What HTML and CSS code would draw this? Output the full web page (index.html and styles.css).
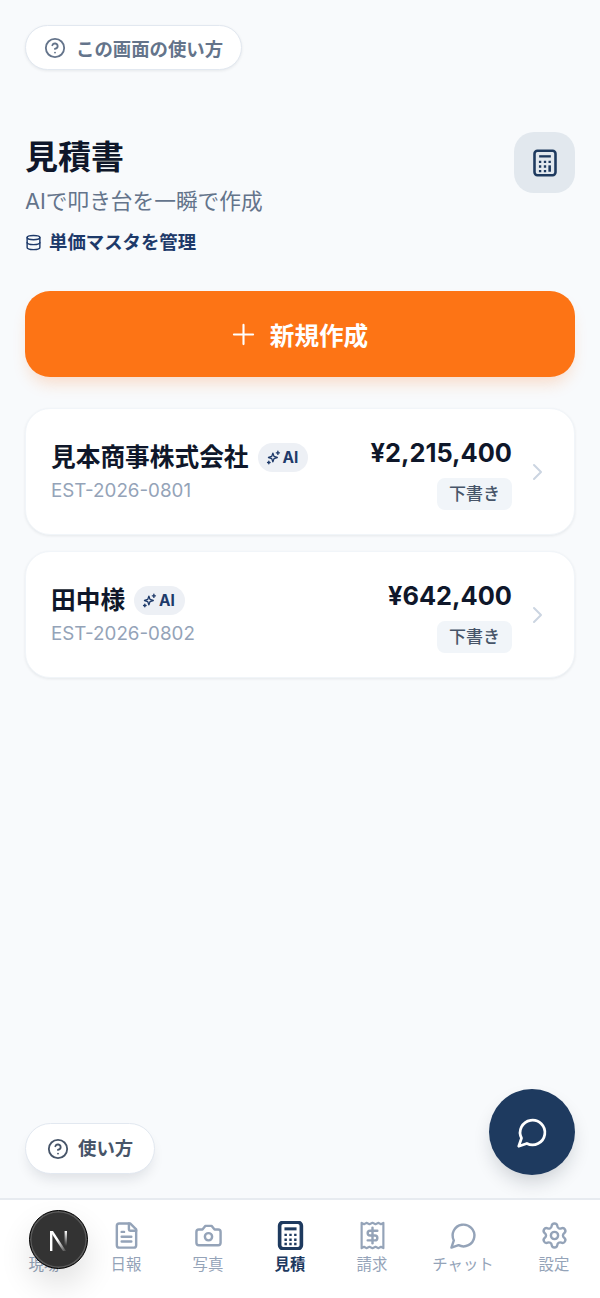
FILE: index.html
```html
<!DOCTYPE html>
<html lang="ja">
<head>
<meta charset="utf-8">
<title>見積書</title>
<link rel="stylesheet" href="styles.css">
</head>
<body>
<div class="page">
  <main class="main">
    <button class="help-pill">
      <svg class="help-icon" viewBox="0 0 24 24" fill="none" stroke="currentColor" stroke-width="2" stroke-linecap="round" stroke-linejoin="round"><circle cx="12" cy="12" r="10"/><path d="M9.100 9a3 3 0 0 1 5.800 1c0 2-3 3-3 3"/><path d="M12 17h.01"/></svg>
      <span>この画面の使い方</span>
    </button>
    <header class="head">
      <div>
        <h1 class="title">見積書</h1>
        <p class="sub">AIで叩き台を一瞬で作成</p>
        <a class="master">
          <svg class="master-icon" viewBox="0 0 24 24" fill="none" stroke="currentColor" stroke-width="2" stroke-linecap="round" stroke-linejoin="round"><ellipse cx="12" cy="5" rx="9" ry="3"/><path d="M3 5v14c0 1.700 4 3 9 3s9-1.300 9-3V5"/><path d="M3 12c0 1.700 4 3 9 3s9-1.300 9-3"/></svg>
          <span>単価マスタを管理</span>
        </a>
      </div>
      <div class="calc-box">
        <svg class="calc-icon" viewBox="0 0 24 24"><rect x="3" y="1.500" width="18" height="21" rx="2.500" fill="none" stroke="currentColor" stroke-width="2.200"/><path d="M7 6.300h10" stroke="currentColor" stroke-width="2"/><path d="M16 14v5.500" stroke="currentColor" stroke-width="2.200"/><path d="M6.800 10h2v2h-2zM11 10h2v2h-2zM15 10h2v2h-2zM6.800 14h2v2h-2zM11 14h2v2h-2zM6.800 18h2v2h-2zM11 18h2v2h-2z" fill="currentColor"/></svg>
      </div>
    </header>
    <button class="create">
      <svg class="plus" viewBox="0 0 24 24" fill="none" stroke="currentColor" stroke-width="2.200" stroke-linecap="round"><path d="M12 2v20M2 12h20"/></svg>
      <span>新規作成</span>
    </button>
    <section class="list">
      <article class="card">
        <div class="card-left">
          <div class="name-row">
            <span class="name">見本商事株式会社</span>
            <span class="ai"><svg class="spark" viewBox="0 0 24 24" fill="none" stroke="currentColor" stroke-width="2.200" stroke-linecap="round" stroke-linejoin="round"><path d="M11 5l1.800 5.200L18 12l-5.200 1.800L11 19l-1.800-5.200L4 12l5.200-1.800z"/><path d="M19 2v5M16.500 4.500h5M4.500 18v4M2.500 20h4"/></svg>AI</span>
          </div>
          <div class="code">EST-2026-0801</div>
        </div>
        <div class="card-right">
          <div class="amount">¥2,215,400</div>
          <span class="status">下書き</span>
        </div>
        <svg class="chev" viewBox="0 0 24 24" fill="none" stroke="currentColor" stroke-width="2" stroke-linecap="round" stroke-linejoin="round"><path d="M9 5l7 7-7 7"/></svg>
      </article>
      <article class="card">
        <div class="card-left">
          <div class="name-row">
            <span class="name">田中様</span>
            <span class="ai"><svg class="spark" viewBox="0 0 24 24" fill="none" stroke="currentColor" stroke-width="2.200" stroke-linecap="round" stroke-linejoin="round"><path d="M11 5l1.800 5.200L18 12l-5.200 1.800L11 19l-1.800-5.200L4 12l5.200-1.800z"/><path d="M19 2v5M16.500 4.500h5M4.500 18v4M2.500 20h4"/></svg>AI</span>
          </div>
          <div class="code">EST-2026-0802</div>
        </div>
        <div class="card-right">
          <div class="amount">¥642,400</div>
          <span class="status">下書き</span>
        </div>
        <svg class="chev" viewBox="0 0 24 24" fill="none" stroke="currentColor" stroke-width="2" stroke-linecap="round" stroke-linejoin="round"><path d="M9 5l7 7-7 7"/></svg>
      </article>
    </section>
  </main>

  <nav class="tabs">
    <a class="tab"><svg class="tab-icon" viewBox="0 0 24 24"></svg><span>現場</span></a>
    <a class="tab">
      <svg class="tab-icon" viewBox="0 0 24 24" fill="none" stroke="currentColor" stroke-width="2" stroke-linecap="round" stroke-linejoin="round"><path d="M15 2H6a2 2 0 0 0-2 2v16a2 2 0 0 0 2 2h12a2 2 0 0 0 2-2V7z"/><path d="M14 2v5a1 1 0 0 0 1 1h5"/><path d="M8 9h2M8 13h8M8 17h8"/></svg>
      <span>日報</span>
    </a>
    <a class="tab">
      <svg class="tab-icon" viewBox="0 0 24 24" fill="none" stroke="currentColor" stroke-width="2" stroke-linecap="round" stroke-linejoin="round"><path d="M14.500 4h-5L7 7H4a2 2 0 0 0-2 2v9a2 2 0 0 0 2 2h16a2 2 0 0 0 2-2V9a2 2 0 0 0-2-2h-3z"/><circle cx="12" cy="13" r="3"/></svg>
      <span>写真</span>
    </a>
    <a class="tab tab-active">
      <svg class="tab-icon" viewBox="0 0 24 24"><rect x="3" y="1" width="18" height="22" rx="3" fill="none" stroke="currentColor" stroke-width="3"/><path d="M7 6.500h10" stroke="currentColor" stroke-width="2.500"/><path d="M7 10.500h2v2H7zM11 10.500h2v2h-2zM15 10.500h2v2h-2zM7 14.500h2v2H7zM11 14.500h2v2h-2zM15 14.500h2v2h-2zM7 18h2v2H7zM11 18h2v2h-2zM15 18h2v2h-2z" fill="currentColor"/></svg>
      <span>見積</span>
    </a>
    <a class="tab">
      <svg class="tab-icon" viewBox="0 0 24 24" fill="none" stroke="currentColor" stroke-width="1.800" stroke-linecap="round" stroke-linejoin="round"><path d="M3 1.500l2 1.200 2-1.200 2.500 1.200L12 1.500l2.500 1.200L17 1.500l2 1.200 2-1.200v21l-2-1.200-2 1.200-2.500-1.200-2.500 1.200-2.500-1.200L7 22.500l-2-1.200-2 1.200z"/><path d="M16 8h-6a2 2 0 0 0 0 4h4a2 2 0 0 1 0 4H8" stroke-width="2"/><path d="M12 18.500V5.500" stroke-width="2"/></svg>
      <span>請求</span>
    </a>
    <a class="tab">
      <svg class="tab-icon" viewBox="0 0 24 24" fill="none" stroke="currentColor" stroke-width="2" stroke-linecap="round" stroke-linejoin="round"><path d="M7.900 20A9 9 0 1 0 4 16.100L2 22z"/></svg>
      <span>チャット</span>
    </a>
    <a class="tab">
      <svg class="tab-icon" viewBox="0 0 24 24" fill="none" stroke="currentColor" stroke-width="2" stroke-linecap="round" stroke-linejoin="round"><path d="M9.670 4.140a2.340 2.340 0 0 1 4.660 0 2.340 2.340 0 0 0 3.320 1.910 2.340 2.340 0 0 1 2.330 4.030 2.340 2.340 0 0 0 0 3.830 2.340 2.340 0 0 1-2.330 4.030 2.340 2.340 0 0 0-3.320 1.920 2.340 2.340 0 0 1-4.660 0 2.340 2.340 0 0 0-3.320-1.920 2.340 2.340 0 0 1-2.330-4.030 2.340 2.340 0 0 0 0-3.830 2.340 2.340 0 0 1 2.330-4.030 2.340 2.340 0 0 0 3.320-1.910"/><circle cx="12" cy="12" r="3"/></svg>
      <span>設定</span>
    </a>
  </nav>

  <button class="float-help">
    <svg class="float-help-icon" viewBox="0 0 24 24" fill="none" stroke="currentColor" stroke-width="2" stroke-linecap="round" stroke-linejoin="round"><circle cx="12" cy="12" r="10"/><path d="M9.100 9a3 3 0 0 1 5.800 1c0 2-3 3-3 3"/><path d="M12 17h.01"/></svg>
    <span>使い方</span>
  </button>
  <button class="fab">
    <svg class="fab-icon" viewBox="0 0 24 24" fill="none" stroke="currentColor" stroke-width="2" stroke-linecap="round" stroke-linejoin="round"><path d="M7.900 20A9 9 0 1 0 4 16.100L2 22z"/></svg>
  </button>
  <div class="next-badge">
    <svg class="next-logo" viewBox="0 0 20 22">
      <defs>
        <linearGradient id="ndiag" x1="0" y1="0" x2="1" y2="1"><stop offset="0.45" stop-color="#fff"/><stop offset="1" stop-color="#fff" stop-opacity="0.1"/></linearGradient>
        <linearGradient id="nstem" x1="0" y1="0" x2="0" y2="1"><stop offset="0" stop-color="#fff"/><stop offset="0.75" stop-color="#fff" stop-opacity="0"/></linearGradient>
      </defs>
      <rect x="1" y="1" width="2.400" height="20" fill="#fff"/>
      <path d="M1 1h3l13 20h-3z" fill="url(#ndiag)"/>
      <rect x="15.600" y="1" width="2.400" height="20" fill="url(#nstem)"/>
    </svg>
  </div>
</div>
</body>
</html>
```
FILE: styles.css
```css
* { box-sizing: border-box; }
html, body { margin: 0; padding: 0; }
body {
  background: #f8fafc;
  font-family: Inter, "Noto Sans CJK JP", sans-serif;
  color: #0f172a;
}
button { font-family: inherit; cursor: pointer; }
.page {
  position: relative;
  width: 600px;
  height: 1298px;
  display: flex;
  flex-direction: column;
  overflow: hidden;
}
.main { flex: 1; padding: 25px 25px 0; }
.help-pill {
  display: inline-flex;
  align-items: center;
  gap: 10px;
  height: 45px;
  padding: 0 18px 0 18px;
  background: #fff;
  border: 1.500px solid #e2e8f0;
  border-radius: 23px;
  box-shadow: 0 1px 3px rgba(15, 23, 42, 0.08);
  color: #64748b;
  font-size: 18.400px;
  font-weight: 700;
  white-space: nowrap;
}
.help-icon { width: 22px; height: 22px; }
.head {
  display: flex;
  justify-content: space-between;
  align-items: flex-start;
  margin-top: 62px;
}
.title {
  margin: 0;
  font-size: 33px;
  line-height: 50px;
  font-weight: 700;
  color: #0f172a;
}
.sub {
  margin: 4px 0 0;
  font-size: 21.700px;
  line-height: 31px;
  color: #64748b;
}
.master {
  display: flex;
  align-items: center;
  gap: 7px;
  margin-top: 13px;
  color: #1e3a6a;
  font-size: 18.400px;
  line-height: 25px;
  font-weight: 700;
}
.master-icon { width: 17px; height: 17px; }
.calc-box {
  width: 61px;
  height: 61px;
  display: flex;
  align-items: center;
  justify-content: center;
  border-radius: 20px;
  background: #e2e8ee;
  color: #1e3a5f;
}
.calc-icon { width: 28px; height: 28px; }
.create {
  display: flex;
  align-items: center;
  justify-content: center;
  gap: 15px;
  width: 550px;
  height: 86px;
  margin-top: 36px;
  border: 0;
  border-radius: 25px;
  background: #fd7415;
  box-shadow: 0 10px 16px -4px rgba(249, 115, 22, 0.22);
  color: #fff;
  font-size: 24.600px;
  font-weight: 700;
}
.plus { width: 23px; height: 23px; }
.list {
  display: flex;
  flex-direction: column;
  gap: 16px;
  margin-top: 31px;
}
.card {
  display: flex;
  align-items: center;
  height: 127px;
  padding: 0 25px;
  background: #fff;
  border: 1px solid #f1f5f9;
  border-radius: 25px;
  box-shadow: 0 1px 3px rgba(15, 23, 42, 0.08);
}
.card-left { flex: 1; }
.name-row { display: flex; align-items: center; gap: 9px; }
.name { font-size: 24.700px; line-height: 37px; font-weight: 700; color: #0f172a; }
.ai {
  display: inline-flex;
  align-items: center;
  gap: 2px;
  height: 29px;
  padding: 0 10px 0 8px;
  border-radius: 15px;
  background: #edf0f5;
  color: #1e3a6a;
  font-size: 15.400px;
  font-weight: 700;
}
.spark { width: 15px; height: 15px; }
.code { font-size: 18.800px; line-height: 27px; color: #94a3b8; margin-top: 1px; }
.card-right {
  display: flex;
  flex-direction: column;
  align-items: flex-end;
  gap: 7px;
}
.amount { font-size: 25.400px; line-height: 37px; font-weight: 700; color: #0f172a; }
.status {
  display: block;
  height: 32px;
  padding: 0 12px;
  border-radius: 8px;
  background: #f1f5f9;
  color: #475569;
  font-size: 17px;
  line-height: 32px;
  font-weight: 500;
}
.chev { width: 24px; height: 24px; margin-left: 13px; color: #cbd5e1; }
.tabs {
  display: grid;
  grid-template-columns: repeat(5, 82px) 100px 82px;
  height: 100px;
  padding: 0 3px;
  background: #fff;
  border-top: 2px solid #e7ebf0;
}
.tab {
  display: flex;
  flex-direction: column;
  align-items: center;
  gap: 4px;
  padding-top: 21px;
  color: #94a3b8;
  font-size: 15.400px;
  line-height: 22px;
  font-weight: 400;
}
.tab-icon { width: 29px; height: 29px; }
.tab-active { color: #1e3a5f; font-weight: 700; }
.float-help {
  position: absolute;
  left: 25px;
  top: 1123px;
  display: flex;
  align-items: center;
  gap: 9px;
  height: 51px;
  padding: 0 21px 3px 21px;
  background: #fff;
  border: 1.500px solid #e2e8f0;
  border-radius: 26px;
  box-shadow: 0 8px 14px -4px rgba(15, 23, 42, 0.12);
  color: #475569;
  font-size: 18.400px;
  font-weight: 700;
}
.float-help-icon { width: 22px; height: 22px; margin-top: 3px; }
.fab {
  position: absolute;
  left: 489px;
  top: 1089px;
  width: 86px;
  height: 86px;
  display: flex;
  align-items: center;
  justify-content: center;
  border: 0;
  border-radius: 50%;
  background: #1e3a5f;
  box-shadow: 0 10px 20px -4px rgba(15, 23, 42, 0.2);
  color: #fff;
}
.fab-icon { width: 33px; height: 33px; }
.next-badge {
  position: absolute;
  left: 29px;
  top: 1210px;
  width: 59px;
  height: 59px;
  display: flex;
  align-items: center;
  justify-content: center;
  border-radius: 50%;
  background: #333;
  border: 1.500px solid #000;
  box-shadow: inset 0 0 0 1.500px #5a5a5a, 0 16px 32px rgba(0, 0, 0, 0.12);
}
.next-logo { width: 20px; height: 22px; margin-top: 2px; }
```
